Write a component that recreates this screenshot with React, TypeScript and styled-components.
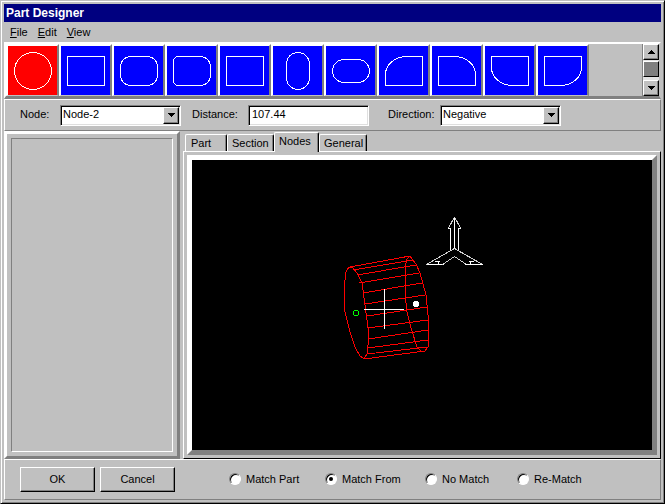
import React, { useState } from "react";
import styled, { createGlobalStyle, css } from "styled-components";

const face = "#c0c0c0";
const shade = "#808080";

const GlobalStyle = createGlobalStyle`
  * { box-sizing: border-box; }
  html, body, #root { height: 100%; }
  body {
    margin: 0;
    background: ${face};
    color: #000;
    font: 11px/14px "Liberation Sans", Arial, sans-serif;
  }
  button, input, select { font: inherit; color: inherit; }
`;

const raised = css`
  border: 1px solid;
  border-color: #fff #000 #000 #fff;
  box-shadow: inset -1px -1px ${shade};
  background: ${face};
`;

const sunken = css`
  border: 1px solid;
  border-color: ${shade} #fff #fff ${shade};
  box-shadow: inset 1px 1px #000, inset -1px -1px #dfdfdf;
  background: #fff;
`;

const Window = styled.div`
  display: flex;
  flex-direction: column;
  min-height: 100%;
  border: 1px solid;
  border-color: ${face} #000 #000 ${face};
  box-shadow: inset 1px 1px #fff, inset -1px -1px ${shade};
  padding: 3px;
  background: ${face};
`;

const TitleBar = styled.h1`
  margin: 0;
  padding: 0 2px;
  background: #000080;
  color: #fff;
  font-size: 12px;
  line-height: 18px;
`;

const MenuBar = styled.nav`
  display: flex;
  gap: 10px;
  height: 20px;
  padding: 0 6px;
`;

const MenuItem = styled.button`
  border: 0;
  padding: 0;
  background: none;
  line-height: 20px;
`;

const ShapeBar = styled.div`
  display: flex;
  justify-content: space-between;
  height: 57px;
  border: solid;
  border-width: 2px 2px 3px 2px;
  border-color: #fff ${face} ${shade} #fff;
`;

const ShapeList = styled.div`
  display: flex;
`;

const ShapeButton = styled.button<{ $active: boolean }>`
  width: 53px;
  height: 52px;
  padding: 0;
  border: solid;
  border-width: 2px 2px 1px;
  border-color: #fff ${shade} ${face} #fff;
  background: ${(p) => (p.$active ? "#f00" : "#00f")};
  svg { display: block; }
`;

const ScrollBar = styled.div`
  display: flex;
  flex-direction: column;
  justify-content: space-between;
  width: 17px;
  background: #e4e4e4;
  border-left: 1px solid ${shade};
`;

const ScrollButton = styled.button`
  ${raised}
  display: grid;
  place-items: center;
  height: 16px;
  padding: 0;
`;

const ScrollThumb = styled.div`
  ${raised}
  height: 16px;
  margin-bottom: 3px;
  background: ${shade};
`;

const FieldBar = styled.div`
  display: flex;
  align-items: center;
  height: 32px;
  padding: 0 15px;
  border: 1px solid;
  border-color: #fff ${shade} ${shade} #fff;
`;

const Field = styled.label<{ $width: number; $gap: number }>`
  display: flex;
  align-items: center;
  justify-content: space-between;
  width: ${(p) => p.$width}px;
  margin-right: ${(p) => p.$gap}px;
  line-height: 12px;
`;

const Caption = styled.span`
  padding-bottom: 2px;
`;

const TextBox = styled.input`
  ${sunken}
  width: 121px;
  height: 21px;
  padding: 0 3px 2px;
  outline: 0;
`;

const SelectFrame = styled.span`
  ${sunken}
  position: relative;
  display: flex;
  width: 121px;
  height: 21px;
  padding: 1px;
`;

const Select = styled.select`
  appearance: none;
  width: 100%;
  border: 0;
  padding: 0 18px 2px 1px;
  background: transparent;
  outline: 0;
`;

const DropArrow = styled.span`
  ${raised}
  position: absolute;
  top: 1px;
  right: 1px;
  bottom: 1px;
  width: 16px;
  display: grid;
  place-items: center;
  pointer-events: none;
`;

const Work = styled.main`
  flex: 1;
  display: flex;
  gap: 3px;
`;

const SidePanel = styled.aside`
  display: flex;
  width: 176px;
  padding: 4px;
  border: 3px solid;
  border-color: #fff ${shade} ${shade} #fff;
`;

const SideInset = styled.div`
  flex: 1;
  border: 1px solid;
  border-color: ${shade} #fff #fff ${shade};
`;

const TabArea = styled.section`
  flex: 1;
  display: flex;
  flex-direction: column;
  min-width: 0;
`;

const TabRow = styled.div`
  display: flex;
  align-items: flex-end;
  height: 20px;
  padding-left: 2px;
`;

const Tab = styled.button<{ $active: boolean; $width: number }>`
  width: ${(p) => p.$width}px;
  height: ${(p) => (p.$active ? 20 : 17)}px;
  margin-bottom: ${(p) => (p.$active ? -1 : 0)}px;
  padding: 0 0 ${(p) => (p.$active ? 3 : 0)}px ${(p) => (p.$active ? 6 : 5)}px;
  border: 1px solid;
  border-color: #fff #000 transparent #fff;
  border-bottom: 0;
  border-radius: 2px 2px 0 0;
  box-shadow: inset -1px 0 ${shade};
  background: ${face};
  text-align: left;
  white-space: nowrap;
  z-index: ${(p) => (p.$active ? 1 : 0)};
  & + & { padding-left: ${(p) => (p.$active ? 6 : 4)}px; }
`;

const TabPane = styled.div`
  flex: 1;
  display: flex;
  padding: 3px;
  border: 1px solid;
  border-color: #fff #000 #000 #fff;
`;

const Viewport = styled.div`
  flex: 1;
  display: grid;
  place-items: center;
  border: 5px solid;
  border-color: #fff ${shade} ${shade} #fff;
  background: #000;
  svg { display: block; }
`;

const Footer = styled.footer`
  display: flex;
  align-items: center;
  height: 41px;
  padding: 0 15px;
  border: 1px solid;
  border-color: #fff ${shade} ${shade} #fff;
`;

const Actions = styled.div`
  display: flex;
  gap: 5px;
  margin-right: 54px;
`;

const PushButton = styled.button`
  ${raised}
  width: 75px;
  height: 25px;
  padding: 0 0 2px;
`;

const Choices = styled.div`
  display: flex;
  padding-bottom: 2px;
`;

const Choice = styled.label<{ $width: number }>`
  display: flex;
  align-items: center;
  gap: 5px;
  width: ${(p) => p.$width}px;
  white-space: nowrap;
`;

const Radio = styled.input`
  appearance: none;
  display: grid;
  place-items: center;
  width: 12px;
  height: 12px;
  margin: 0;
  border: 1px solid;
  border-color: ${shade} #fff #fff ${shade};
  border-radius: 50%;
  background: #fff;
  box-shadow: inset 1px 1px #000;
  &:checked::before {
    content: "";
    width: 4px;
    height: 4px;
    border-radius: 50%;
    background: #000;
  }
`;

const shapes = [
  { name: "Circle", d: "M25 6.500a18.500 18.500 0 1 1 0 37a18.500 18.500 0 1 1 0-37z" },
  { name: "Rectangle", d: "M6.500 10.500h37v29h-37z" },
  { name: "Rounded rectangle", d: "M16.500 10.500h17a10 10 0 0 1 10 10v9a10 10 0 0 1-10 10h-17a10 10 0 0 1-10-10v-9a10 10 0 0 1 10-10z" },
  { name: "Right rounded", d: "M9.500 10.500h24a10 10 0 0 1 10 10v9a10 10 0 0 1-10 10h-24l-3-3v-23z" },
  { name: "Box", d: "M6.500 10.500h37v29h-37z" },
  { name: "Vertical oval", d: "M25 6.500a11.500 11.500 0 0 1 11.500 11.500v14a11.500 11.500 0 0 1-23 0v-14a11.500 11.500 0 0 1 11.500-11.500z" },
  { name: "Horizontal oval", d: "M18 13.500h14a11.500 11.500 0 0 1 0 23h-14a11.500 11.500 0 0 1 0-23z" },
  { name: "Top left arc", d: "M43.500 10.500v29h-37v-11a21 18 0 0 1 21-18z" },
  { name: "Top right arc", d: "M6.500 10.500v29h37v-11a21 18 0 0 0-21-18z" },
  { name: "Bottom left arc", d: "M43.500 39.500v-29h-37v11a21 18 0 0 0 21 18z" },
  { name: "Bottom right arc", d: "M6.500 39.500v-29h37v11a21 18 0 0 1-21 18z" },
];

const ribs = [
  [350, 267, 410, 256], [353, 270, 413, 260], [357, 275, 416, 265], [359, 283, 419, 273],
  [363, 293, 422, 283], [365, 304, 425, 295], [367, 316, 427, 307], [368, 328, 428, 320],
  [368, 339, 428, 330], [368, 348, 428, 340], [367, 354, 427, 347], [364, 359, 425, 351],
];

const Arrow = ({ up = false }: { up?: boolean }) => (
  <svg width="7" height="4" viewBox="0 0 7 4" shapeRendering="crispEdges" aria-hidden="true">
    <path d={up ? "M3 0h1v1h1v1h1v1h1v1H0V3h1V2h1V1h1z" : "M0 0h7v1H6v1H5v1H4v1H3V3H2V2H1V1H0z"} />
  </svg>
);

const Scene = () => (
  <svg width="460" height="290" viewBox="192 160 460 290" fill="none" shapeRendering="crispEdges" role="img" aria-label="Wireframe cylinder with nodes">
    <g stroke="#f00">
      <path d="M349 267L346 272L344 288L345 312L350 332L355 347L360 356L364 359L367 354L368 345V328L365 305L362 283L357 273L353 268z" />
      <path d="M410 256L407 259L405 267V293L407 312L411 328L417 347L421 351H425L428 347V315L426 295L420 273L416 264z" />
      {ribs.map(([x1, y1, x2, y2]) => (
        <line key={y1} x1={x1} y1={y1} x2={x2} y2={y2} />
      ))}
    </g>
    <path d="M364 309.500h40M384.500 289v40" stroke="#fff" />
    <circle cx="416" cy="304" r="3" fill="#fff" />
    <path d="M354.500 310.500h3l1 1v3l-1 1h-3l-1-1v-3z" stroke="#0f0" />
    <g stroke="#fff">
      <path d="M454.500 217v32M450.500 229v22M458.500 229v22M448 228.500h3M458 228.500h3" />
      <path d="M426 264.500h18M465 264.500h18M435 261.500h5M469 261.500h5M438.500 262v2M470.500 262v2" />
      <path stroke="#d0d0d0" d="M454.500 217l-6 11M454.500 217l6 11M454.500 248.500l-28 16M454.500 248.500l28 16M454.500 256.500l-12 8M454.500 256.500l12 8" />
    </g>
  </svg>
);

export default function App() {
  const [shape, setShape] = useState("Circle");
  const [tab, setTab] = useState("Nodes");
  return (
    <>
      <GlobalStyle />
      <Window>
        <TitleBar>Part Designer</TitleBar>
        <MenuBar>
          <MenuItem><u>F</u>ile</MenuItem>
          <MenuItem><u>E</u>dit</MenuItem>
          <MenuItem><u>V</u>iew</MenuItem>
        </MenuBar>
        <ShapeBar>
          <ShapeList>
            {shapes.map((s) => (
              <ShapeButton key={s.name} aria-label={s.name} $active={shape === s.name} onClick={() => setShape(s.name)}>
                <svg width="49" height="49" fill="none" stroke="#fff" shapeRendering="crispEdges"><path d={s.d} /></svg>
              </ShapeButton>
            ))}
          </ShapeList>
          <ScrollBar>
            <ScrollButton aria-label="Scroll up"><Arrow up /></ScrollButton>
            <ScrollThumb />
            <ScrollButton aria-label="Scroll down"><Arrow /></ScrollButton>
          </ScrollBar>
        </ShapeBar>
        <FieldBar>
          <Field $width={161} $gap={11}>
            <Caption>Node:</Caption>
            <SelectFrame>
              <Select defaultValue="Node-2"><option>Node-1</option><option>Node-2</option></Select>
              <DropArrow><Arrow /></DropArrow>
            </SelectFrame>
          </Field>
          <Field $width={177} $gap={19}>
            <Caption>Distance:</Caption>
            <TextBox defaultValue="107.44" />
          </Field>
          <Field $width={173} $gap={0}>
            <Caption>Direction:</Caption>
            <SelectFrame>
              <Select defaultValue="Negative"><option>Positive</option><option>Negative</option></Select>
              <DropArrow><Arrow /></DropArrow>
            </SelectFrame>
          </Field>
        </FieldBar>
        <Work>
          <SidePanel><SideInset /></SidePanel>
          <TabArea>
            <TabRow role="tablist">
              {[["Part", 42], ["Section", 47], ["Nodes", 45], ["General", 48]].map(([name, width]) => (
                <Tab key={name} role="tab" aria-selected={tab === name} $active={tab === name} $width={Number(width)} onClick={() => setTab(String(name))}>
                  {name}
                </Tab>
              ))}
            </TabRow>
            <TabPane role="tabpanel">
              <Viewport><Scene /></Viewport>
            </TabPane>
          </TabArea>
        </Work>
        <Footer>
          <Actions>
            <PushButton>OK</PushButton>
            <PushButton>Cancel</PushButton>
          </Actions>
          <Choices role="radiogroup" aria-label="Match mode">
            {[["Match Part", 96], ["Match From", 100], ["No Match", 92], ["Re-Match", 80]].map(([name, width]) => (
              <Choice key={name} $width={Number(width)}>
                <Radio type="radio" name="match" defaultChecked={name === "Match From"} />
                {name}
              </Choice>
            ))}
          </Choices>
        </Footer>
      </Window>
    </>
  );
}
